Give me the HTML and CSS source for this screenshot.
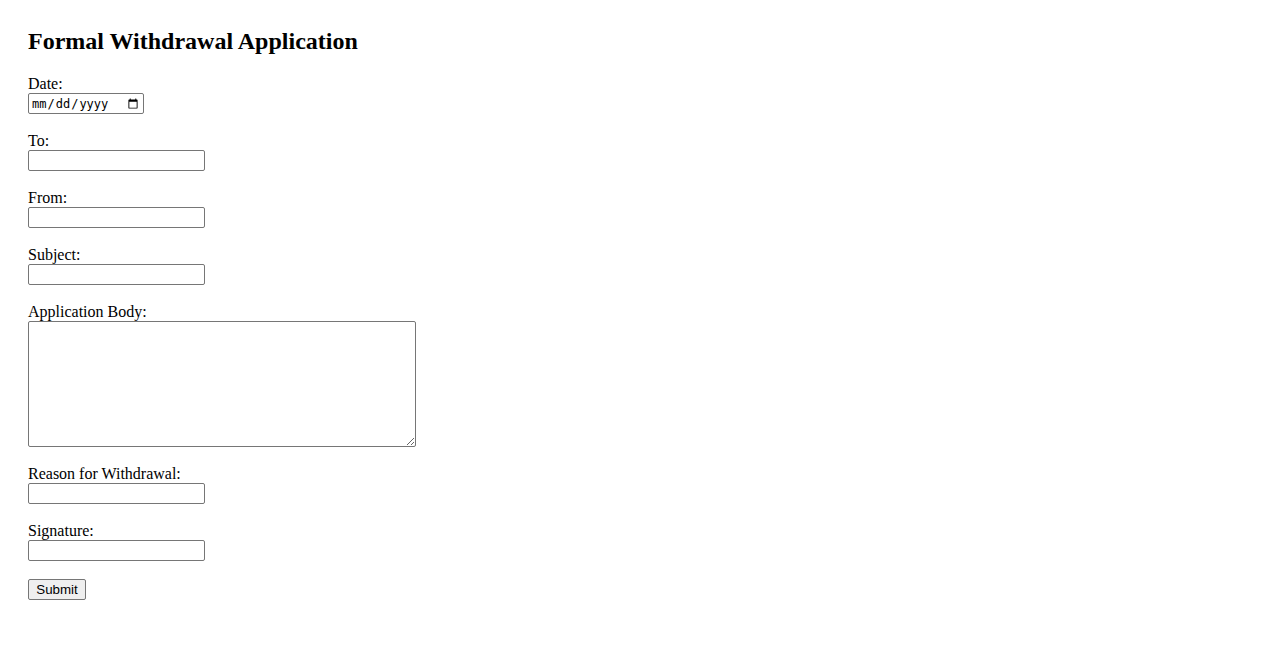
FILE: index.html
```html
<!DOCTYPE html>
<html>
<head>
<meta charset="utf-8">
<title>Formal Withdrawal Application</title>
<link rel="stylesheet" href="styles.css">
</head>
<body>
<div class="page">
  <h2 class="title">Formal Withdrawal Application</h2>
  <form class="form">
    <div class="field">
      <label class="label" for="date">Date:</label>
      <input class="input date" type="date" id="date">
    </div>
    <div class="field">
      <label class="label" for="to">To:</label>
      <input class="input text" type="text" id="to">
    </div>
    <div class="field">
      <label class="label" for="from">From:</label>
      <input class="input text" type="text" id="from">
    </div>
    <div class="field">
      <label class="label" for="subject">Subject:</label>
      <input class="input text" type="text" id="subject">
    </div>
    <div class="field">
      <label class="label" for="body">Application Body:</label>
      <textarea class="input area" id="body"></textarea>
    </div>
    <div class="field">
      <label class="label" for="reason">Reason for Withdrawal:</label>
      <input class="input text" type="text" id="reason">
    </div>
    <div class="field">
      <label class="label" for="sig">Signature:</label>
      <input class="input text" type="text" id="sig">
    </div>
    <div class="actions">
      <button class="submit" type="submit">Submit</button>
    </div>
  </form>
</div>
</body>
</html>
```
FILE: styles.css
```css
html, body {
  margin: 0;
  background: #fff;
}
body {
  font-family: "Liberation Serif", "Times New Roman", serif;
  font-size: 16px;
  color: #000;
}
.page {
  padding: 28px;
}
.title {
  margin: 0 0 20px;
  font-size: 24px;
  line-height: 27px;
  font-weight: bold;
}
.form {
  display: flex;
  flex-direction: column;
  align-items: flex-start;
}
.field {
  display: flex;
  flex-direction: column;
  align-items: flex-start;
  margin-bottom: 18px;
}
.label {
  display: block;
  line-height: 17px;
  height: 18px;
}
.input {
  box-sizing: border-box;
  margin: 0;
  border: 1px solid #767676;
  border-radius: 2px;
  background: #fff;
  font-family: "DejaVu Sans Mono", monospace;
  font-size: 13.33px;
  padding: 1px 2px;
  color: #000;
}
.date {
  width: 116px;
  height: 21px;
  font-size: 12px;
}
.text {
  width: 177px;
  height: 21px;
}
.area {
  width: 388px;
  height: 126px;
  padding: 2px;
  resize: both;
}
.submit {
  box-sizing: border-box;
  width: 58px;
  height: 21px;
  margin: 0;
  padding: 1px 6px;
  font-family: "Liberation Sans", Arial, sans-serif;
  font-size: 13.33px;
  color: #000;
  background: #efefef;
  border: 1px solid #767676;
  border-radius: 2px;
}
```
